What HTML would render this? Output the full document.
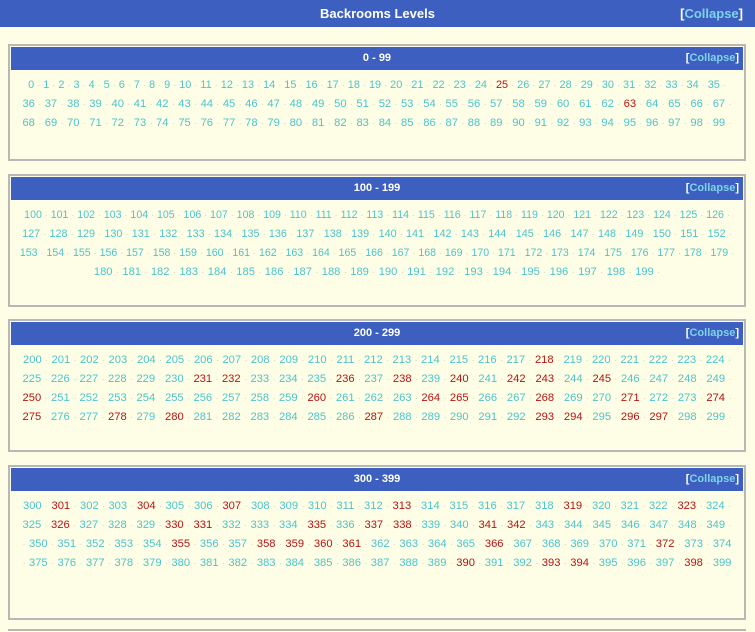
<!DOCTYPE html>
<html><head><meta charset="utf-8"><style>
*{margin:0;padding:0;box-sizing:border-box}
body{width:755px;height:632px;background:#fefee6;font-family:"Liberation Sans",sans-serif;overflow:hidden;position:relative}
.top{position:absolute;left:0;top:0;width:755px;height:27px;background:#3d5fc0;color:#fff;font-weight:bold;font-size:13px;text-align:center;line-height:27px}
.col{position:absolute;right:12px;top:0;font-weight:bold;color:#fff}
.col span{color:#7fd3e6}
.box{position:absolute;left:8px;width:738px;border:2px solid #b8b8b8;background:#fefee6;overflow:hidden}
.hd{margin:1px 1px 0 1px;height:23px;background:#3d5fc0;color:#fff;font-weight:bold;font-size:11px;text-align:center;line-height:23px;position:relative}
.hd .col{right:4px;font-size:11px}
.r{white-space:nowrap;text-align:center;font-size:11.2px;color:#4cc3cc;height:19px;line-height:19px;word-spacing:0.3px}
.r.s{font-size:10.6px;word-spacing:0}
.r.t{font-size:10.9px;word-spacing:0}
.r.u{font-size:10.8px;word-spacing:0.2px}
.r i{font-style:normal;color:#d0d0c0;font-size:9px}
.r b{font-weight:normal;color:#b61414}
.c{padding-top:6px}
</style></head><body>
<div class="top">Backrooms Levels<div class="col">[<span>Collapse</span>]</div></div>

<div class="box" style="top:44px;height:117px"><div class="hd">0 - 99<div class="col">[<span>Collapse</span>]</div></div><div class="c">
<div class="r t">0 <i>·</i> 1 <i>·</i> 2 <i>·</i> 3 <i>·</i> 4 <i>·</i> 5 <i>·</i> 6 <i>·</i> 7 <i>·</i> 8 <i>·</i> 9 <i>·</i> 10 <i>·</i> 11 <i>·</i> 12 <i>·</i> 13 <i>·</i> 14 <i>·</i> 15 <i>·</i> 16 <i>·</i> 17 <i>·</i> 18 <i>·</i> 19 <i>·</i> 20 <i>·</i> 21 <i>·</i> 22 <i>·</i> 23 <i>·</i> 24 <i>·</i> <b>25</b> <i>·</i> 26 <i>·</i> 27 <i>·</i> 28 <i>·</i> 29 <i>·</i> 30 <i>·</i> 31 <i>·</i> 32 <i>·</i> 33 <i>·</i> 34 <i>·</i> 35 <i>·</i></div>
<div class="r">36 <i>·</i> 37 <i>·</i> 38 <i>·</i> 39 <i>·</i> 40 <i>·</i> 41 <i>·</i> 42 <i>·</i> 43 <i>·</i> 44 <i>·</i> 45 <i>·</i> 46 <i>·</i> 47 <i>·</i> 48 <i>·</i> 49 <i>·</i> 50 <i>·</i> 51 <i>·</i> 52 <i>·</i> 53 <i>·</i> 54 <i>·</i> 55 <i>·</i> 56 <i>·</i> 57 <i>·</i> 58 <i>·</i> 59 <i>·</i> 60 <i>·</i> 61 <i>·</i> 62 <i>·</i> <b>63</b> <i>·</i> 64 <i>·</i> 65 <i>·</i> 66 <i>·</i> 67 <i>·</i></div>
<div class="r">68 <i>·</i> 69 <i>·</i> 70 <i>·</i> 71 <i>·</i> 72 <i>·</i> 73 <i>·</i> 74 <i>·</i> 75 <i>·</i> 76 <i>·</i> 77 <i>·</i> 78 <i>·</i> 79 <i>·</i> 80 <i>·</i> 81 <i>·</i> 82 <i>·</i> 83 <i>·</i> 84 <i>·</i> 85 <i>·</i> 86 <i>·</i> 87 <i>·</i> 88 <i>·</i> 89 <i>·</i> 90 <i>·</i> 91 <i>·</i> 92 <i>·</i> 93 <i>·</i> 94 <i>·</i> 95 <i>·</i> 96 <i>·</i> 97 <i>·</i> 98 <i>·</i> 99 <i>·</i></div>
</div></div>

<div class="box" style="top:174px;height:133px"><div class="hd">100 - 199<div class="col">[<span>Collapse</span>]</div></div><div class="c">
<div class="r s">100 <i>·</i> 101 <i>·</i> 102 <i>·</i> 103 <i>·</i> 104 <i>·</i> 105 <i>·</i> 106 <i>·</i> 107 <i>·</i> 108 <i>·</i> 109 <i>·</i> 110 <i>·</i> 111 <i>·</i> 112 <i>·</i> 113 <i>·</i> 114 <i>·</i> 115 <i>·</i> 116 <i>·</i> 117 <i>·</i> 118 <i>·</i> 119 <i>·</i> 120 <i>·</i> 121 <i>·</i> 122 <i>·</i> 123 <i>·</i> 124 <i>·</i> 125 <i>·</i> 126 <i>·</i></div>
<div class="r u">127 <i>·</i> 128 <i>·</i> 129 <i>·</i> 130 <i>·</i> 131 <i>·</i> 132 <i>·</i> 133 <i>·</i> 134 <i>·</i> 135 <i>·</i> 136 <i>·</i> 137 <i>·</i> 138 <i>·</i> 139 <i>·</i> 140 <i>·</i> 141 <i>·</i> 142 <i>·</i> 143 <i>·</i> 144 <i>·</i> 145 <i>·</i> 146 <i>·</i> 147 <i>·</i> 148 <i>·</i> 149 <i>·</i> 150 <i>·</i> 151 <i>·</i> 152 <i>·</i></div>
<div class="r s">153 <i>·</i> 154 <i>·</i> 155 <i>·</i> 156 <i>·</i> 157 <i>·</i> 158 <i>·</i> 159 <i>·</i> 160 <i>·</i> 161 <i>·</i> 162 <i>·</i> 163 <i>·</i> 164 <i>·</i> 165 <i>·</i> 166 <i>·</i> 167 <i>·</i> 168 <i>·</i> 169 <i>·</i> 170 <i>·</i> 171 <i>·</i> 172 <i>·</i> 173 <i>·</i> 174 <i>·</i> 175 <i>·</i> 176 <i>·</i> 177 <i>·</i> 178 <i>·</i> 179 <i>·</i></div>
<div class="r">180 <i>·</i> 181 <i>·</i> 182 <i>·</i> 183 <i>·</i> 184 <i>·</i> 185 <i>·</i> 186 <i>·</i> 187 <i>·</i> 188 <i>·</i> 189 <i>·</i> 190 <i>·</i> 191 <i>·</i> 192 <i>·</i> 193 <i>·</i> 194 <i>·</i> 195 <i>·</i> 196 <i>·</i> 197 <i>·</i> 198 <i>·</i> 199 <i>·</i></div>
</div></div>

<div class="box" style="top:319px;height:133px"><div class="hd">200 - 299<div class="col">[<span>Collapse</span>]</div></div><div class="c">
<div class="r">200 <i>·</i> 201 <i>·</i> 202 <i>·</i> 203 <i>·</i> 204 <i>·</i> 205 <i>·</i> 206 <i>·</i> 207 <i>·</i> 208 <i>·</i> 209 <i>·</i> 210 <i>·</i> 211 <i>·</i> 212 <i>·</i> 213 <i>·</i> 214 <i>·</i> 215 <i>·</i> 216 <i>·</i> 217 <i>·</i> <b>218</b> <i>·</i> 219 <i>·</i> 220 <i>·</i> 221 <i>·</i> 222 <i>·</i> 223 <i>·</i> 224 <i>·</i></div>
<div class="r">225 <i>·</i> 226 <i>·</i> 227 <i>·</i> 228 <i>·</i> 229 <i>·</i> 230 <i>·</i> <b>231</b> <i>·</i> <b>232</b> <i>·</i> 233 <i>·</i> 234 <i>·</i> 235 <i>·</i> <b>236</b> <i>·</i> 237 <i>·</i> <b>238</b> <i>·</i> 239 <i>·</i> <b>240</b> <i>·</i> 241 <i>·</i> <b>242</b> <i>·</i> <b>243</b> <i>·</i> 244 <i>·</i> <b>245</b> <i>·</i> 246 <i>·</i> 247 <i>·</i> 248 <i>·</i> 249 <i>·</i></div>
<div class="r"><b>250</b> <i>·</i> 251 <i>·</i> 252 <i>·</i> 253 <i>·</i> 254 <i>·</i> 255 <i>·</i> 256 <i>·</i> 257 <i>·</i> 258 <i>·</i> 259 <i>·</i> <b>260</b> <i>·</i> 261 <i>·</i> 262 <i>·</i> 263 <i>·</i> <b>264</b> <i>·</i> <b>265</b> <i>·</i> 266 <i>·</i> 267 <i>·</i> <b>268</b> <i>·</i> 269 <i>·</i> 270 <i>·</i> <b>271</b> <i>·</i> 272 <i>·</i> 273 <i>·</i> <b>274</b> <i>·</i></div>
<div class="r"><b>275</b> <i>·</i> 276 <i>·</i> 277 <i>·</i> <b>278</b> <i>·</i> 279 <i>·</i> <b>280</b> <i>·</i> 281 <i>·</i> 282 <i>·</i> 283 <i>·</i> 284 <i>·</i> 285 <i>·</i> 286 <i>·</i> <b>287</b> <i>·</i> 288 <i>·</i> 289 <i>·</i> 290 <i>·</i> 291 <i>·</i> 292 <i>·</i> <b>293</b> <i>·</i> <b>294</b> <i>·</i> 295 <i>·</i> <b>296</b> <i>·</i> <b>297</b> <i>·</i> 298 <i>·</i> 299 <i>·</i></div>
</div></div>

<div class="box" style="top:465px;height:155px"><div class="hd">300 - 399<div class="col">[<span>Collapse</span>]</div></div><div class="c">
<div class="r">300 <i>·</i> <b>301</b> <i>·</i> 302 <i>·</i> 303 <i>·</i> <b>304</b> <i>·</i> 305 <i>·</i> 306 <i>·</i> <b>307</b> <i>·</i> 308 <i>·</i> 309 <i>·</i> 310 <i>·</i> 311 <i>·</i> 312 <i>·</i> <b>313</b> <i>·</i> 314 <i>·</i> 315 <i>·</i> 316 <i>·</i> 317 <i>·</i> 318 <i>·</i> <b>319</b> <i>·</i> 320 <i>·</i> 321 <i>·</i> 322 <i>·</i> <b>323</b> <i>·</i> 324 <i>·</i></div>
<div class="r">325 <i>·</i> <b>326</b> <i>·</i> 327 <i>·</i> 328 <i>·</i> 329 <i>·</i> <b>330</b> <i>·</i> <b>331</b> <i>·</i> 332 <i>·</i> 333 <i>·</i> 334 <i>·</i> <b>335</b> <i>·</i> 336 <i>·</i> <b>337</b> <i>·</i> <b>338</b> <i>·</i> 339 <i>·</i> 340 <i>·</i> <b>341</b> <i>·</i> <b>342</b> <i>·</i> 343 <i>·</i> 344 <i>·</i> 345 <i>·</i> 346 <i>·</i> 347 <i>·</i> 348 <i>·</i> 349 <i>·</i></div>
<div class="r"><i>·</i> 350 <i>·</i> 351 <i>·</i> 352 <i>·</i> 353 <i>·</i> 354 <i>·</i> <b>355</b> <i>·</i> 356 <i>·</i> 357 <i>·</i> <b>358</b> <i>·</i> <b>359</b> <i>·</i> <b>360</b> <i>·</i> <b>361</b> <i>·</i> 362 <i>·</i> 363 <i>·</i> 364 <i>·</i> 365 <i>·</i> <b>366</b> <i>·</i> 367 <i>·</i> 368 <i>·</i> 369 <i>·</i> 370 <i>·</i> 371 <i>·</i> <b>372</b> <i>·</i> 373 <i>·</i> 374</div>
<div class="r"><i>·</i> 375 <i>·</i> 376 <i>·</i> 377 <i>·</i> 378 <i>·</i> 379 <i>·</i> 380 <i>·</i> 381 <i>·</i> 382 <i>·</i> 383 <i>·</i> 384 <i>·</i> 385 <i>·</i> 386 <i>·</i> 387 <i>·</i> 388 <i>·</i> 389 <i>·</i> <b>390</b> <i>·</i> 391 <i>·</i> 392 <i>·</i> <b>393</b> <i>·</i> <b>394</b> <i>·</i> 395 <i>·</i> 396 <i>·</i> 397 <i>·</i> <b>398</b> <i>·</i> 399</div>
</div></div>
<div style="position:absolute;left:8px;top:629px;width:738px;height:3px;border-top:2px solid #b8b8b8"></div>
</body></html>
